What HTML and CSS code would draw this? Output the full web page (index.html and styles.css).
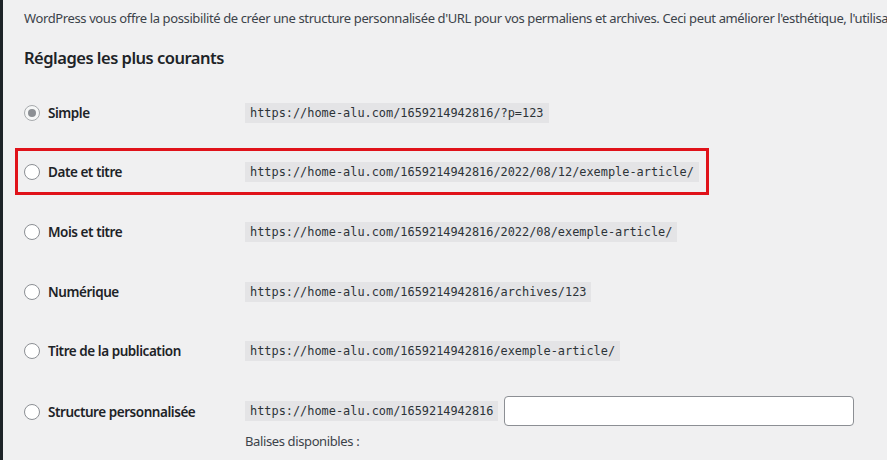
FILE: index.html
```html
<!DOCTYPE html>
<html lang="fr">
<head>
  <meta charset="UTF-8" />
  <meta name="viewport" content="width=device-width, initial-scale=1.0"/>
  <title>Réglages des permaliens</title>
  <link rel="stylesheet" href="styles.css">
</head>
<body>

<div class="wrap">
  <p class="intro">WordPress vous offre la possibilité de créer une structure personnalisée d'URL pour vos permaliens et archives. Ceci peut améliorer l'esthétique, l'utilisabilité et la compatibilité ascendante de vos liens.</p>

  <h2>Réglages les plus courants</h2>

  <div class="options">
    <div class="row">
      <label class="choice"><input type="radio" name="perma" checked disabled> Simple</label>
      <code>https://home-alu.com/1659214942816/?p=123</code>
    </div>
    <div class="row">
      <label class="choice"><input type="radio" name="perma"> Date et titre</label>
      <code>https://home-alu.com/1659214942816/2022/08/12/exemple-article/</code>
      <span class="highlight"></span>
    </div>
    <div class="row">
      <label class="choice"><input type="radio" name="perma"> Mois et titre</label>
      <code>https://home-alu.com/1659214942816/2022/08/exemple-article/</code>
    </div>
    <div class="row">
      <label class="choice"><input type="radio" name="perma"> Numérique</label>
      <code>https://home-alu.com/1659214942816/archives/123</code>
    </div>
    <div class="row">
      <label class="choice"><input type="radio" name="perma"> Titre de la publication</label>
      <code>https://home-alu.com/1659214942816/exemple-article/</code>
    </div>
    <div class="row row-custom">
      <label class="choice"><input type="radio" name="perma"> Structure personnalisée</label>
      <div class="custom">
        <div class="custom-line">
          <code>https://home-alu.com/1659214942816</code>
          <input type="text" class="regular-text">
        </div>
        <p class="tags">Balises disponibles :</p>
      </div>
    </div>
  </div>
</div>

</body>
</html>
```

FILE: styles.css
```css
html, body {
  margin: 0;
  padding: 0;
  height: 100%;
  overflow: hidden;
}

body {
  font-family: "Noto Sans", "Open Sans", sans-serif;
  font-size: 13px;
  letter-spacing: -0.38px;
  color: #3c434a;
  background: #f0f0f1;
}

.wrap {
  height: 100%;
  border-left: 3px solid #1d2327;
  padding-left: 21px;
  position: relative;
}

.intro {
  margin: 0;
  padding-top: 8px;
  line-height: 20px;
  white-space: nowrap;
}

h2 {
  margin: 18px 0 0;
  font-size: 16.5px;
  font-weight: 600;
  letter-spacing: -0.5px;
  line-height: 24px;
  color: #1d2327;
}

.options {
  margin-top: 13px;
}

.row {
  display: flex;
  align-items: center;
  height: 59.6px;
  position: relative;
}

.choice {
  width: 221px;
  flex-shrink: 0;
  display: flex;
  align-items: center;
  gap: 8px;
  font-size: 13.5px;
  font-weight: 600;
  letter-spacing: -0.45px;
  color: #1d2327;
}

input[type="radio"] {
  appearance: none;
  -webkit-appearance: none;
  width: 16px;
  height: 16px;
  margin: 0;
  border: 1px solid #8c8f94;
  border-radius: 50%;
  background: #fff;
  position: relative;
}

input[type="radio"]:checked::before {
  content: "";
  position: absolute;
  left: 3px;
  top: 3px;
  width: 8px;
  height: 8px;
  border-radius: 50%;
  background: #8c8f94;
}

input[type="radio"]:disabled {
  background: #f6f7f7;
  border-color: #a7aaad;
}

code {
  font-family: "DejaVu Sans Mono", "Liberation Mono", monospace;
  font-size: 11.9px;
  letter-spacing: 0;
  line-height: 16px;
  padding: 2px 5px;
  background: #e4e4e6;
  color: #2c3338;
}

.highlight {
  position: absolute;
  left: -9px;
  top: 5px;
  width: 688px;
  height: 41px;
  border: 3px solid #e0121a;
}

.row-custom {
  align-items: flex-start;
  height: auto;
  padding-top: 15px;
}

.row-custom .choice {
  margin-top: 7px;
}

.custom-line {
  display: flex;
  align-items: center;
  gap: 6px;
}

.regular-text {
  width: 350px;
  height: 30px;
  box-sizing: border-box;
  border: 1px solid #8c8f94;
  border-radius: 4px;
  background: #fff;
  margin: 0;
}

.tags {
  margin: 5px 0 0;
  line-height: 20px;
}
```
